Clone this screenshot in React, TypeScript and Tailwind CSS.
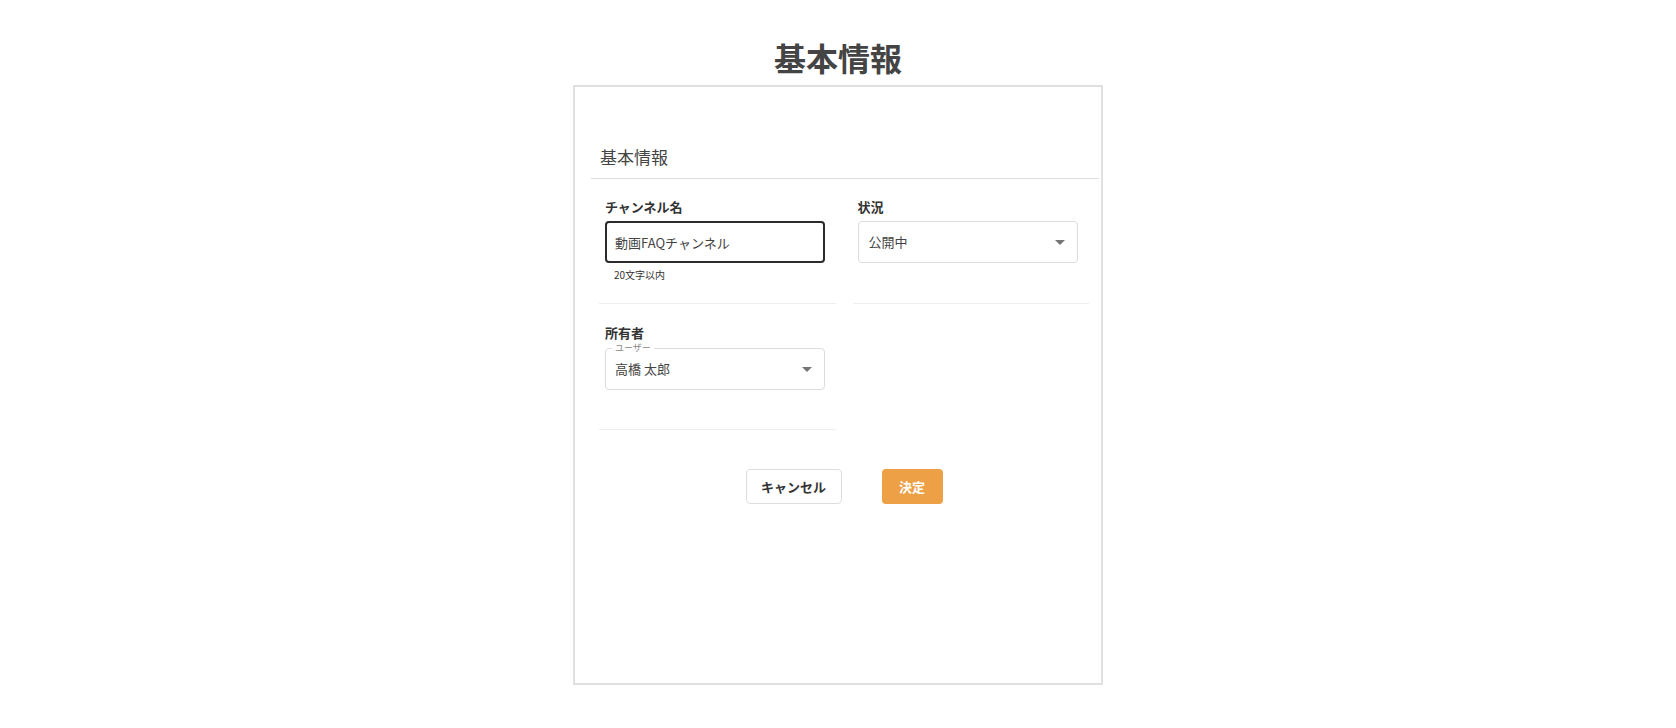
import { useState } from 'react';

const FONT = { fontFamily: '"Noto Sans CJK JP", "Noto Sans", sans-serif' };

function DropArrow() {
  return (
    <svg width="24" height="24" viewBox="0 0 24 24" className="absolute right-[5px] top-1/2 -translate-y-1/2 text-[#757575]">
      <path d="M7 10l5 5 5-5z" fill="currentColor" />
    </svg>
  );
}

export default function App() {
  const [name, setName] = useState('動画FAQチャンネル');

  return (
    <div className="min-h-screen bg-white flex flex-col items-center pt-[38px]" style={FONT}>
      {/* ── Page title ────────────────────────────────────────────── */}
      <h1 className="text-[32px] leading-[38px] font-bold text-[#444] mb-[9px]">基本情報</h1>

      {/* ── Card ──────────────────────────────────────────────────── */}
      <div className="w-[530px] h-[600px] border-2 border-[#e0e0e0] pt-[57px] pl-[16px] pr-[2px]">
        <div className="border-b border-[#dedede] pl-[9px] pb-[8px]">
          <h2 className="text-[17px] leading-[26px] text-[#444]">基本情報</h2>
        </div>

        <div className="grid grid-cols-2 gap-x-[17px] ml-[8px] mr-[10px]">
          {/* チャンネル名 */}
          <div className="border-b border-[#eeeeee] px-[6px] pt-[18px] pb-[21px]">
            <label className="block text-[13px] leading-[20px] font-bold text-[#333] mb-[4px]">チャンネル名</label>
            <input
              value={name}
              onChange={(e) => setName(e.target.value)}
              className="w-[220px] h-[42px] border-2 border-[#2b2b2b] rounded-[4px] px-[8px] text-[13px] text-[#444] outline-none"
              style={FONT}
            />
            <p className="text-[10px] leading-[14px] text-[#333] mt-[5px] pl-[9px]">20文字以内</p>
          </div>

          {/* 状況 */}
          <div className="border-b border-[#eeeeee] px-[5px] pt-[18px] pb-[21px]">
            <label className="block text-[13px] leading-[20px] font-bold text-[#333] mb-[4px]">状況</label>
            <div className="relative w-[220px] h-[42px] border border-[#dcdcdc] rounded-[4px] flex items-center pl-[10px]">
              <span className="text-[13px] text-[#444]">公開中</span>
              <DropArrow />
            </div>
          </div>

          {/* 所有者 */}
          <div className="border-b border-[#eeeeee] px-[6px] pt-[19px] pb-[39px]">
            <label className="block text-[13px] leading-[20px] font-bold text-[#333] mb-[5px]">所有者</label>
            <div className="relative w-[220px] h-[42px] border border-[#dcdcdc] rounded-[4px] flex items-center pl-[9px]">
              <span className="absolute -top-[7px] left-[6px] bg-white px-[3px] text-[9px] leading-[12px] text-[#888]">ユーザー</span>
              <span className="text-[13px] text-[#444]">高橋 太郎</span>
              <DropArrow />
            </div>
          </div>
          <div />
        </div>

        {/* ── Actions ──────────────────────────────────────────────── */}
        <div className="flex justify-center gap-[40px] mt-[39px] ml-[8px] mr-[10px]">
          <button className="w-[96px] h-[35px] border border-[#dedede] rounded-[4px] bg-white text-[13px] font-bold text-[#333]">
            キャンセル
          </button>
          <button className="w-[61px] h-[35px] rounded-[4px] bg-[#eda045] text-[13px] font-bold text-white">
            決定
          </button>
        </div>
      </div>
    </div>
  );
}
